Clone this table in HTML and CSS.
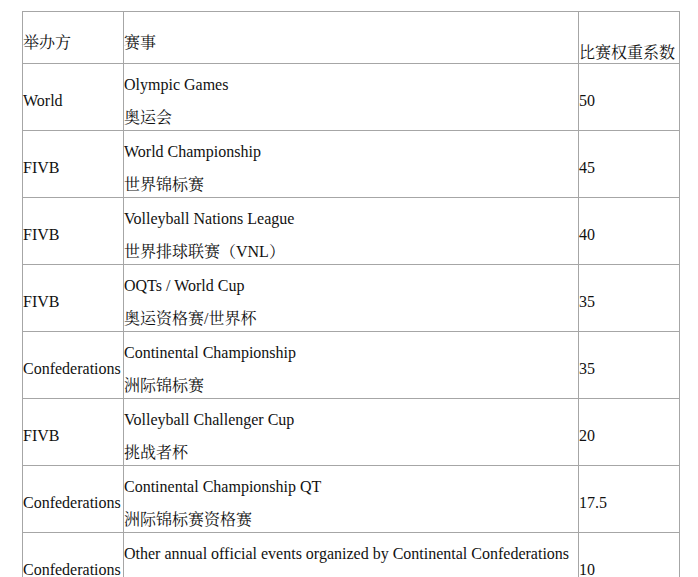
FILE: index.html
```html
<!DOCTYPE html>
<html lang="zh">
<head>
<meta charset="utf-8">
<title>比赛权重系数</title>
<link rel="stylesheet" href="styles.css">
</head>
<body>
<table class="weights">
  <colgroup>
    <col class="c-org">
    <col class="c-event">
    <col class="c-weight">
  </colgroup>
  <tr class="head">
    <td>举办方</td>
    <td>赛事</td>
    <td class="low">比赛权重系数</td>
  </tr>
  <tr>
    <td>World</td>
    <td class="ev"><div class="lines"><div>Olympic Games</div><div>奥运会</div></div></td>
    <td>50</td>
  </tr>
  <tr>
    <td>FIVB</td>
    <td class="ev"><div class="lines"><div>World Championship</div><div>世界锦标赛</div></div></td>
    <td>45</td>
  </tr>
  <tr>
    <td>FIVB</td>
    <td class="ev"><div class="lines"><div>Volleyball Nations League</div><div>世界排球联赛（VNL）</div></div></td>
    <td>40</td>
  </tr>
  <tr>
    <td>FIVB</td>
    <td class="ev"><div class="lines"><div>OQTs / World Cup</div><div>奥运资格赛/世界杯</div></div></td>
    <td>35</td>
  </tr>
  <tr>
    <td>Confederations</td>
    <td class="ev"><div class="lines"><div>Continental Championship</div><div>洲际锦标赛</div></div></td>
    <td>35</td>
  </tr>
  <tr>
    <td>FIVB</td>
    <td class="ev"><div class="lines"><div>Volleyball Challenger Cup</div><div>挑战者杯</div></div></td>
    <td>20</td>
  </tr>
  <tr>
    <td>Confederations</td>
    <td class="ev"><div class="lines"><div>Continental Championship QT</div><div>洲际锦标赛资格赛</div></div></td>
    <td>17.5</td>
  </tr>
  <tr>
    <td>Confederations</td>
    <td class="ev"><div class="lines"><div>Other annual official events organized by Continental Confederations</div><div class="blank"></div></div></td>
    <td>10</td>
  </tr>
</table>
</body>
</html>
```

FILE: styles.css
```css
html, body {
  background: #ffffff;
}
body {
  margin: 11px 0 0 22px;
  font-family: "Liberation Serif", "Noto Serif CJK SC", "Noto Sans CJK SC", serif;
  font-size: 16px;
  color: #111;
}
.weights {
  border-collapse: collapse;
  table-layout: fixed;
  width: 657px;
  border: 1px solid #8e8e8e;
}
.c-org { width: 101px; }
.c-event { width: 455px; }
.c-weight { width: 101px; }

.weights td {
  border: 1px solid #a6a6a6;
  padding: 8px 0 0 0;
  vertical-align: middle;
  text-align: left;
  white-space: nowrap;
  overflow: visible;
}
.weights tr.head td {
  height: 43px;
}
.weights td.low {
  vertical-align: bottom;
  padding-top: 0;
  line-height: 21px;
}
.weights td.ev {
  padding-top: 4px;
}
.lines {
  margin-bottom: -4px;
  line-height: 33px;
}
.blank {
  height: 33px;
}
```
